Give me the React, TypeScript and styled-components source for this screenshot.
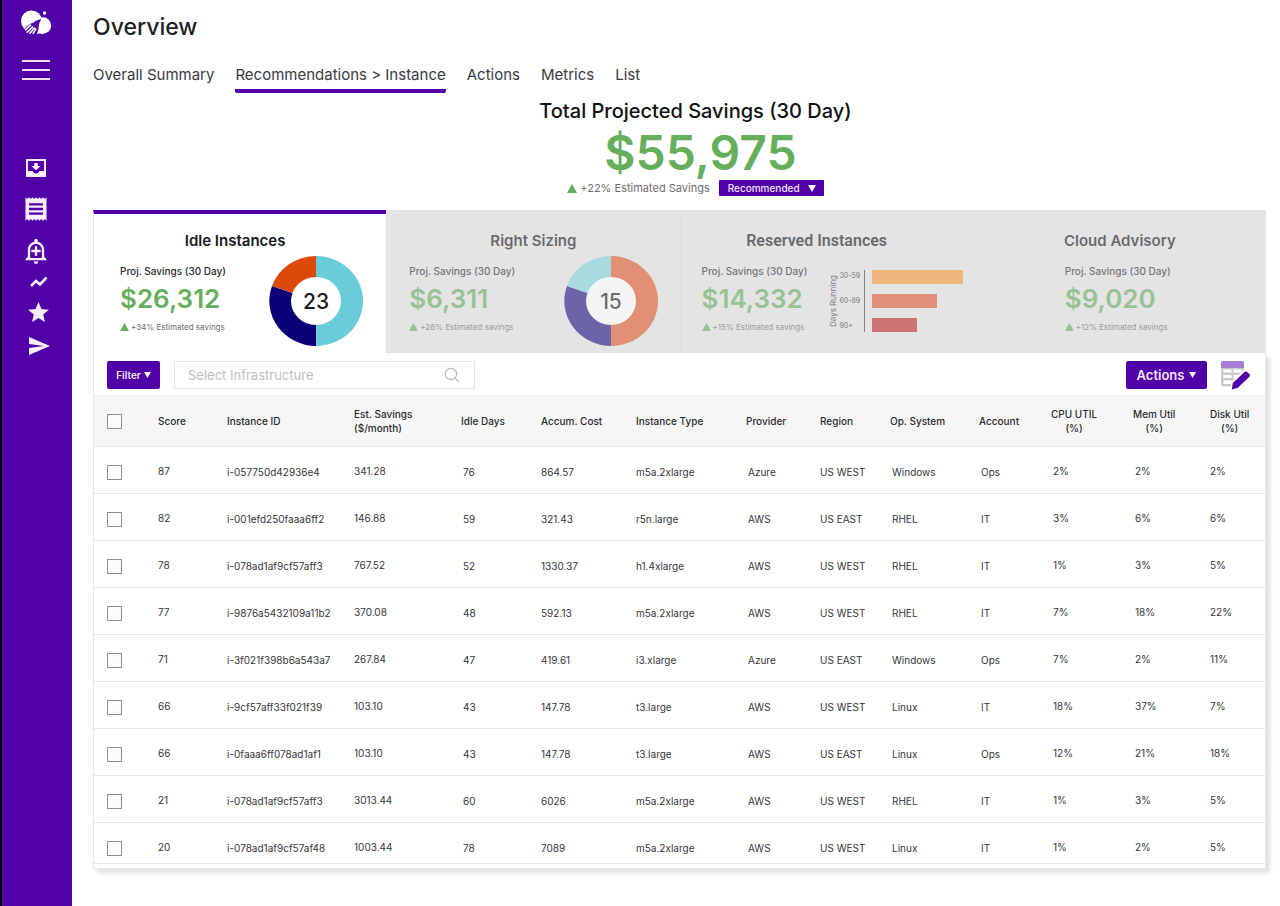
import React from 'react';
import styled, { createGlobalStyle } from 'styled-components';
import { MdReceipt, MdOutlineAddAlert, MdStar, MdSend } from 'react-icons/md';

const purple = '#5100a8';
const green = '#64ae5c';

const GlobalStyle = createGlobalStyle`
  *, *::before, *::after { box-sizing: border-box; }
  body {
    margin: 0;
    background: #fff;
    color: #1f1f24;
    font-family: Inter, "Open Sans", sans-serif;
  }
  button, input, select { font-family: inherit; }
`;

const Page = styled.div`
  display: flex;
  min-height: 100vh;
`;

const Sidebar = styled.nav`
  flex: 0 0 72px;
  display: flex;
  flex-direction: column;
  align-items: center;
  padding: 10px 2px 0 0;
  border-left: 2px solid #000;
  background: ${purple};
  color: #fff;
`;

const SideButton = styled.button<{ $height: number }>`
  display: flex;
  align-items: center;
  justify-content: center;
  width: 48px;
  height: ${(p) => p.$height}px;
  padding: 0;
  border: 0;
  background: none;
  color: #f7efff;
  cursor: pointer;
`;

const SideGroup = styled.div`
  display: flex;
  flex-direction: column;
  padding-left: 5px;
`;

const Logo = styled.svg`
  display: block;
  width: 32px;
  height: 26px;
`;

const MenuButton = styled(SideButton)`
  margin: 21px 0 69px;
`;

const Main = styled.main`
  flex: 1;
  min-width: 0;
  padding: 12px 14px 32px 21px;
`;

const PageTitle = styled.h1`
  margin: 0;
  font-size: 23px;
  line-height: 30px;
  font-weight: 500;
`;

const Nav = styled.nav`
  display: flex;
  gap: 21px;
  margin-top: 21px;
`;

const NavLink = styled.a<{ $active?: boolean }>`
  padding-bottom: 2px;
  border-bottom: 4px solid ${(p) => (p.$active ? purple : 'transparent')};
  border-radius: 2px;
  color: #3a3a3f;
  font-size: 15px;
  line-height: 24px;
  text-decoration: none;
  white-space: nowrap;
`;

const Summary = styled.section`
  display: flex;
  flex-direction: column;
  align-items: center;
  padding: 4px 0 14px 32px;
`;

const SummaryTitle = styled.h2`
  margin: 0;
  color: #111;
  font-size: 20px;
  line-height: 28px;
  font-weight: 500;
`;

const SummaryAmount = styled.div`
  margin-left: 10px;
  color: ${green};
  font-size: 48px;
  line-height: 55px;
  font-weight: 600;
`;

const SummaryFoot = styled.div`
  display: flex;
  align-items: center;
  gap: 9px;
  height: 16px;
`;

const Change = styled.span<{ $large?: boolean }>`
  display: flex;
  align-items: center;
  gap: ${(p) => (p.$large ? 3 : 2)}px;
  color: #6c6c6c;
  font-size: ${(p) => (p.$large ? 11 : 8)}px;
  line-height: 16px;
  white-space: nowrap;

  svg {
    width: ${(p) => (p.$large ? 10 : 9)}px;
    height: ${(p) => (p.$large ? 9 : 8)}px;
    fill: ${green};
  }
`;

const SelectWrap = styled.div`
  position: relative;
  display: flex;

  svg {
    position: absolute;
    right: 8px;
    top: 5px;
    width: 8px;
    height: 7px;
    fill: #fff;
    pointer-events: none;
  }
`;

const Select = styled.select`
  appearance: none;
  width: 105px;
  height: 16px;
  padding: 0 0 0 9px;
  border: 0;
  border-radius: 1px;
  background: ${purple};
  color: #f1e4ff;
  font-size: 10px;
  font-weight: 500;
`;

const CardStrip = styled.div`
  display: grid;
  grid-template-columns: repeat(4, 1fr);
`;

const Card = styled.button<{ $active?: boolean }>`
  display: block;
  min-width: 0;
  height: 143px;
  padding: 0;
  border: 0;
  border-top: 4px solid ${(p) => (p.$active ? purple : '#e4e4e4')};
  border-left: 1px solid ${(p) => (p.$active ? '#e8e8e8' : '#dfdfdf')};
  background: ${(p) => (p.$active ? '#fff' : '#e4e4e4')};
  color: inherit;
  text-align: left;
  cursor: pointer;
`;

const CardInner = styled.div<{ $dim?: boolean }>`
  height: 100%;
  padding-top: 17px;
  opacity: ${(p) => (p.$dim ? 0.6 : 1)};
`;

const CardTitle = styled.h3<{ $shift?: number; $font?: string }>`
  margin: 0;
  padding-right: ${(p) => p.$shift ?? 0}px;
  color: #18181c;
  font-family: ${(p) => p.$font ?? 'inherit'};
  font-size: ${(p) => (p.$font ? 16 : 15)}px;
  line-height: 20px;
  font-weight: 600;
  text-align: center;
`;

const CardBody = styled.div<{ $inset: number }>`
  display: flex;
  align-items: flex-start;
  padding-left: ${(p) => p.$inset}px;
`;

const Stats = styled.div<{ $width: number }>`
  flex: 0 0 ${(p) => p.$width}px;
  padding-top: 12px;
`;

const StatLabel = styled.div`
  color: #2b2b30;
  font-size: 10px;
  line-height: 16px;
  font-weight: 500;
`;

const StatAmount = styled.div`
  color: ${green};
  font-size: 26px;
  line-height: 40px;
  font-weight: 600;
`;

const DonutChart = styled.svg`
  flex: none;
  width: 94px;
  height: 90px;
  margin-top: 5px;
`;

const BarChart = styled.div`
  display: flex;
  height: 62px;
  margin-top: 19px;
  color: #333;
  font-size: 7px;
  line-height: 10px;
`;

const AxisName = styled.div`
  writing-mode: vertical-rl;
  transform: rotate(180deg);
  width: 12px;
  text-align: center;
  font-size: 8px;
`;

const AxisTicks = styled.div`
  display: flex;
  flex-direction: column;
  justify-content: space-between;
  width: 24px;
  padding: 1px 0;
`;

const Bars = styled.div`
  display: flex;
  flex-direction: column;
  gap: 10px;
  padding-left: 7px;
  border-left: 1px solid #444;
`;

const Bar = styled.div<{ $color: string }>`
  height: 14px;
  background: ${(p) => p.$color};
`;

const Panel = styled.section`
  padding-bottom: 4px;
  border: 1px solid #e8e8e8;
  border-top: 0;
  box-shadow: 4px 4px 4px rgba(0, 0, 0, 0.12);
`;

const Toolbar = styled.div`
  display: flex;
  align-items: center;
  height: 42px;
  padding: 2px 14px 0 13px;
`;

const ActionButton = styled.button<{ $large?: boolean }>`
  display: flex;
  align-items: center;
  justify-content: center;
  gap: ${(p) => (p.$large ? 5 : 3)}px;
  width: ${(p) => (p.$large ? 81 : 53)}px;
  height: 28px;
  padding: 0;
  border: 0;
  border-radius: 2px;
  background: ${purple};
  color: #f3e8ff;
  font-size: ${(p) => (p.$large ? 13 : 10)}px;
  font-weight: 600;
  cursor: pointer;

  svg {
    width: 7px;
    height: 6px;
    fill: #fff;
  }
`;

const SearchBox = styled.label`
  display: flex;
  align-items: center;
  width: 301px;
  height: 28px;
  margin: 0 auto 0 14px;
  padding: 0 14px 0 13px;
  border: 1px solid #e4e4e4;

  svg {
    flex: none;
    width: 16px;
    height: 16px;
  }
`;

const SearchInput = styled.input`
  flex: 1;
  min-width: 0;
  padding: 0;
  border: 0;
  outline: 0;
  background: none;
  font-size: 13px;

  &::placeholder {
    color: #bdbdbd;
    opacity: 1;
  }
`;

const IconButton = styled.button`
  display: flex;
  margin-left: 14px;
  padding: 0;
  border: 0;
  background: none;
  cursor: pointer;

  svg {
    width: 30px;
    height: 30px;
  }
`;

const Table = styled.table`
  width: 100%;
  border-collapse: separate;
  border-spacing: 0;
  table-layout: fixed;
`;

const HeadCell = styled.th`
  height: 52px;
  padding: 0;
  border-top: 1px solid #ededed;
  border-bottom: 1px solid #e6e6e6;
  background: #f6f6f6;
  color: #2b2b2f;
  font-size: 10px;
  line-height: 14px;
  font-weight: 500;
  text-align: left;
  vertical-align: middle;
  white-space: nowrap;
`;

const HeadLabel = styled.span<{ $center?: boolean }>`
  display: inline-block;
  text-align: ${(p) => (p.$center ? 'center' : 'left')};
`;

const Row = styled.tr`
  height: 47px;

  &:last-child {
    height: 41px;
  }
`;

const Cell = styled.td<{ $raised?: boolean; $indent?: number }>`
  padding: ${(p) => (p.$raised ? 17 : 18)}px 0 0 ${(p) => p.$indent ?? 0}px;
  border-bottom: 1px solid #e6e6e6;
  color: #35353a;
  font-size: 10px;
  line-height: 14px;
  vertical-align: top;
  white-space: nowrap;
`;

const Check = styled.input`
  appearance: none;
  display: block;
  width: 15px;
  height: 15px;
  margin: 0 0 0 13px;
  border: 1px solid #8f8f8f;
  background: #fbfbfb;
`;

type Column = {
  label: string[];
  width: number;
  raised?: boolean;
  indent?: number;
  center?: boolean;
};

const columns: Column[] = [
  { label: ['Score'], width: 69, raised: true },
  { label: ['Instance ID'], width: 127 },
  { label: ['Est. Savings', '($/month)'], width: 107, raised: true },
  { label: ['Idle Days'], width: 80, indent: 2 },
  { label: ['Accum. Cost'], width: 95 },
  { label: ['Instance Type'], width: 110 },
  { label: ['Provider'], width: 74, indent: 2 },
  { label: ['Region'], width: 70 },
  { label: ['Op. System'], width: 89, indent: 2 },
  { label: ['Account'], width: 72, indent: 2 },
  { label: ['CPU UTIL', '(%)'], width: 82, raised: true, indent: 2, center: true },
  { label: ['Mem Util', '(%)'], width: 77, raised: true, indent: 2, center: true },
  { label: ['Disk Util', '(%)'], width: 55, raised: true, center: true },
];

const rows: string[][] = [
  ['87', 'i-057750d42936e4', '341.28', '76', '864.57', 'm5a.2xlarge', 'Azure', 'US WEST', 'Windows', 'Ops', '2%', '2%', '2%'],
  ['82', 'i-001efd250faaa6ff2', '146.88', '59', '321.43', 'r5n.large', 'AWS', 'US EAST', 'RHEL', 'IT', '3%', '6%', '6%'],
  ['78', 'i-078ad1af9cf57aff3', '767.52', '52', '1330.37', 'h1.4xlarge', 'AWS', 'US WEST', 'RHEL', 'IT', '1%', '3%', '5%'],
  ['77', 'i-9876a5432109a11b2', '370.08', '48', '592.13', 'm5a.2xlarge', 'AWS', 'US WEST', 'RHEL', 'IT', '7%', '18%', '22%'],
  ['71', 'i-3f021f398b6a543a7', '267.84', '47', '419.61', 'i3.xlarge', 'Azure', 'US EAST', 'Windows', 'Ops', '7%', '2%', '11%'],
  ['66', 'i-9cf57aff33f021f39', '103.10', '43', '147.78', 't3.large', 'AWS', 'US WEST', 'Linux', 'IT', '18%', '37%', '7%'],
  ['66', 'i-0faaa6ff078ad1af1', '103.10', '43', '147.78', 't3.large', 'AWS', 'US EAST', 'Linux', 'Ops', '12%', '21%', '18%'],
  ['21', 'i-078ad1af9cf57aff3', '3013.44', '60', '6026', 'm5a.2xlarge', 'AWS', 'US WEST', 'RHEL', 'IT', '1%', '3%', '5%'],
  ['20', 'i-078ad1af9cf57af48', '1003.44', '78', '7089', 'm5a.2xlarge', 'AWS', 'US WEST', 'Linux', 'IT', '1%', '2%', '5%'],
];

const UpTriangle = () => (
  <svg viewBox="0 0 10 9" aria-hidden="true">
    <path d="M5 0 10 9H0z" />
  </svg>
);

const DownTriangle = () => (
  <svg viewBox="0 0 8 7" aria-hidden="true">
    <path d="M0 0h8L4 7z" />
  </svg>
);

const Donut = ({ colors, value }: { colors: [string, string, string]; value: string }) => (
  <DonutChart viewBox="0 0 94 90" role="img" aria-label={`${value} instances`}>
    <path d="M47 0A47 45 0 0 1 47 90V45z" fill={colors[0]} />
    <path d="M47 90A47 45 0 0 1 3 30L47 45z" fill={colors[1]} />
    <path d="M3 30A47 45 0 0 1 47 0V45z" fill={colors[2]} />
    <ellipse cx="47" cy="45" rx="25" ry="24" fill="#fff" />
    <text x="47" y="53" textAnchor="middle" fontSize="21" fontWeight="500" fill="#1b1b1f">
      {value}
    </text>
  </DonutChart>
);

const Stat = ({ amount, change, width }: { amount: string; change: string; width: number }) => (
  <Stats $width={width}>
    <StatLabel>Proj. Savings (30 Day)</StatLabel>
    <StatAmount>{amount}</StatAmount>
    <Change>
      <UpTriangle />
      {change} Estimated savings
    </Change>
  </Stats>
);

export default function App() {
  return (
    <Page>
      <GlobalStyle />
      <Sidebar aria-label="Main">
        <Logo viewBox="0 0 32 26" aria-label="Home" role="img">
          <circle cx="11.5" cy="11" r="10.5" fill="#fff" />
          <circle cx="23" cy="15.500" r="8.200" fill="#fff" />
          <path d="M11 16h12v7.700H11z" fill="#fff" />
          <circle cx="24.500" cy="3" r="1.700" fill="#fff" />
          <path
            d="M21.400 9.200c-3 .1-5.400 1.200-7.600 3.200-3.200.7-6 2.600-8.400 5.600L2 21.500 4.600 26h10.800c1.600-2.600 3.100-5.200 3.300-8.600.1-3.200.8-5.400 2.700-8.200z"
            fill={purple}
          />
          <path
            d="M5.600 19.700l5-4.500M7.200 22.200l5.400-5.200M10 23.200l4.400-5.200M13.200 23.400l2.600-4.200"
            stroke="#fff"
            strokeWidth="1.600"
            strokeLinecap="round"
          />
        </Logo>
        <MenuButton $height={25} aria-label="Menu">
          <svg width="28" height="22" viewBox="0 0 28 22" stroke="#f0e2ff" strokeWidth="2" aria-hidden="true">
            <path d="M0 2h28M0 11h28M0 20h28" />
          </svg>
        </MenuButton>
        <SideButton $height={34} aria-label="Inbox">
          <svg width="20" height="18" viewBox="0 0 20 18" aria-hidden="true">
            <path
              d="M0 0h20v18H0zM2 2v10h4.500c.4 1.600 1.800 2.500 3.500 2.500s3.100-.9 3.500-2.500H18V2z"
              fill="#f7efff"
              fillRule="evenodd"
            />
            <path d="M8.200 4h3.600v3h2.800L10 11.300 5.400 7h2.800z" fill="#f7efff" />
          </svg>
        </SideButton>
        <SideButton $height={48} aria-label="Reports">
          <MdReceipt size={28} />
        </SideButton>
        <SideButton $height={36} aria-label="Add alert">
          <MdOutlineAddAlert size={28} />
        </SideButton>
        <SideGroup>
          <SideButton $height={26} aria-label="Trends">
            <svg width="20" height="14" viewBox="0 0 20 14" aria-hidden="true">
              <path d="M2 11l5-5 4 3.500 6.500-7" fill="none" stroke="#f7efff" strokeWidth="2.600" />
            </svg>
          </SideButton>
          <SideButton $height={34} aria-label="Favorites">
            <MdStar size={25} />
          </SideButton>
          <SideButton $height={34} aria-label="Send">
            <MdSend size={24} />
          </SideButton>
        </SideGroup>
      </Sidebar>

      <Main>
        <PageTitle>Overview</PageTitle>
        <Nav aria-label="Views">
          <NavLink href="#summary">Overall Summary</NavLink>
          <NavLink href="#recommendations" $active aria-current="page">
            Recommendations &gt; Instance
          </NavLink>
          <NavLink href="#actions">Actions</NavLink>
          <NavLink href="#metrics">Metrics</NavLink>
          <NavLink href="#list">List</NavLink>
        </Nav>

        <Summary>
          <SummaryTitle>Total Projected Savings (30 Day)</SummaryTitle>
          <SummaryAmount>$55,975</SummaryAmount>
          <SummaryFoot>
            <Change $large>
              <UpTriangle />
              +22% Estimated Savings
            </Change>
            <SelectWrap>
              <Select aria-label="Savings basis" defaultValue="Recommended">
                <option>Recommended</option>
              </Select>
              <DownTriangle />
            </SelectWrap>
          </SummaryFoot>
        </Summary>

        <CardStrip>
          <Card $active aria-pressed="true">
            <CardInner>
              <CardTitle $shift={10}>Idle Instances</CardTitle>
              <CardBody $inset={26}>
                <Stat amount="$26,312" change="+34%" width={149} />
                <Donut colors={['#6accd9', '#0c0078', '#dc4a0a']} value="23" />
              </CardBody>
            </CardInner>
          </Card>
          <Card>
            <CardInner $dim>
              <CardTitle>Right Sizing</CardTitle>
              <CardBody $inset={22}>
                <Stat amount="$6,311" change="+26%" width={155} />
                <Donut colors={['#e05a2c', '#1c1080', '#7fd6dd']} value="15" />
              </CardBody>
            </CardInner>
          </Card>
          <Card>
            <CardInner $dim>
              <CardTitle $shift={20} $font="Roboto, sans-serif">
                Reserved Instances
              </CardTitle>
              <CardBody $inset={21}>
                <Stat amount="$14,332" change="+15%" width={126} />
                <BarChart>
                  <AxisName>Days Running</AxisName>
                  <AxisTicks>
                    <span>30-59</span>
                    <span>60-89</span>
                    <span>90+</span>
                  </AxisTicks>
                  <Bars>
                    <Bar $color="#f59a3c" style={{ width: 91 }} />
                    <Bar $color="#e05a32" style={{ width: 65 }} />
                    <Bar $color="#bd2a28" style={{ width: 45 }} />
                  </Bars>
                </BarChart>
              </CardBody>
            </CardInner>
          </Card>
          <Card>
            <CardInner $dim>
              <CardTitle>Cloud Advisory</CardTitle>
              <CardBody $inset={91}>
                <Stat amount="$9,020" change="+12%" width={126} />
              </CardBody>
            </CardInner>
          </Card>
        </CardStrip>

        <Panel>
          <Toolbar>
            <ActionButton>
              Filter <DownTriangle />
            </ActionButton>
            <SearchBox>
              <SearchInput type="text" placeholder="Select Infrastructure" aria-label="Select Infrastructure" />
              <svg viewBox="0 0 16 16" fill="none" stroke="#b9b9b9" strokeWidth="1.200" aria-hidden="true">
                <circle cx="7" cy="7" r="5.600" />
                <path d="M11 11l4 4" />
              </svg>
            </SearchBox>
            <ActionButton $large>
              Actions <DownTriangle />
            </ActionButton>
            <IconButton aria-label="Edit columns">
              <svg viewBox="0 0 30 30" aria-hidden="true">
                <rect x="0" y="2" width="23" height="24.500" rx="2" fill="#c9c9c9" />
                <path d="M0 8V3a2 2 0 0 1 2-2h19a2 2 0 0 1 2 2v5z" fill="#a87fd0" />
                <path
                  d="M2.500 9.500H10.500v3H2.500zM12.500 9.500h8v3h-8zM2.500 15h8v3h-8zM12.500 15h8v3h-8zM2.500 20.500h8v3.500h-8zM12.500 20.500h8v3.500h-8z"
                  fill="#fff"
                />
                <path d="M9.500 30l1-8.500L22.500 10 30 17 17 30z" fill="#fff" />
                <path
                  d="M10.800 29.500l1-6.500L23.500 12.100c.8-.8 1.900-.8 2.700 0l2.200 1.900c.8.8.8 1.900 0 2.700L16.900 27.700z"
                  fill={purple}
                />
              </svg>
            </IconButton>
          </Toolbar>

          <Table>
            <colgroup>
              <col width={64} />
              {columns.map((c) => (
                <col key={c.label[0]} width={c.width} />
              ))}
            </colgroup>
            <thead>
              <tr>
                <HeadCell>
                  <Check type="checkbox" aria-label="Select all instances" />
                </HeadCell>
                {columns.map((c) => (
                  <HeadCell key={c.label[0]} scope="col">
                    <HeadLabel $center={c.center}>
                      {c.label[0]}
                      {c.label[1] && (
                        <>
                          <br />
                          {c.label[1]}
                        </>
                      )}
                    </HeadLabel>
                  </HeadCell>
                ))}
              </tr>
            </thead>
            <tbody>
              {rows.map((row, r) => (
                <Row key={r}>
                  <Cell>
                    <Check type="checkbox" aria-label={`Select ${row[1]}`} />
                  </Cell>
                  {row.map((value, i) => (
                    <Cell key={i} $raised={columns[i].raised} $indent={columns[i].indent}>
                      {value}
                    </Cell>
                  ))}
                </Row>
              ))}
            </tbody>
          </Table>
        </Panel>
      </Main>
    </Page>
  );
}
